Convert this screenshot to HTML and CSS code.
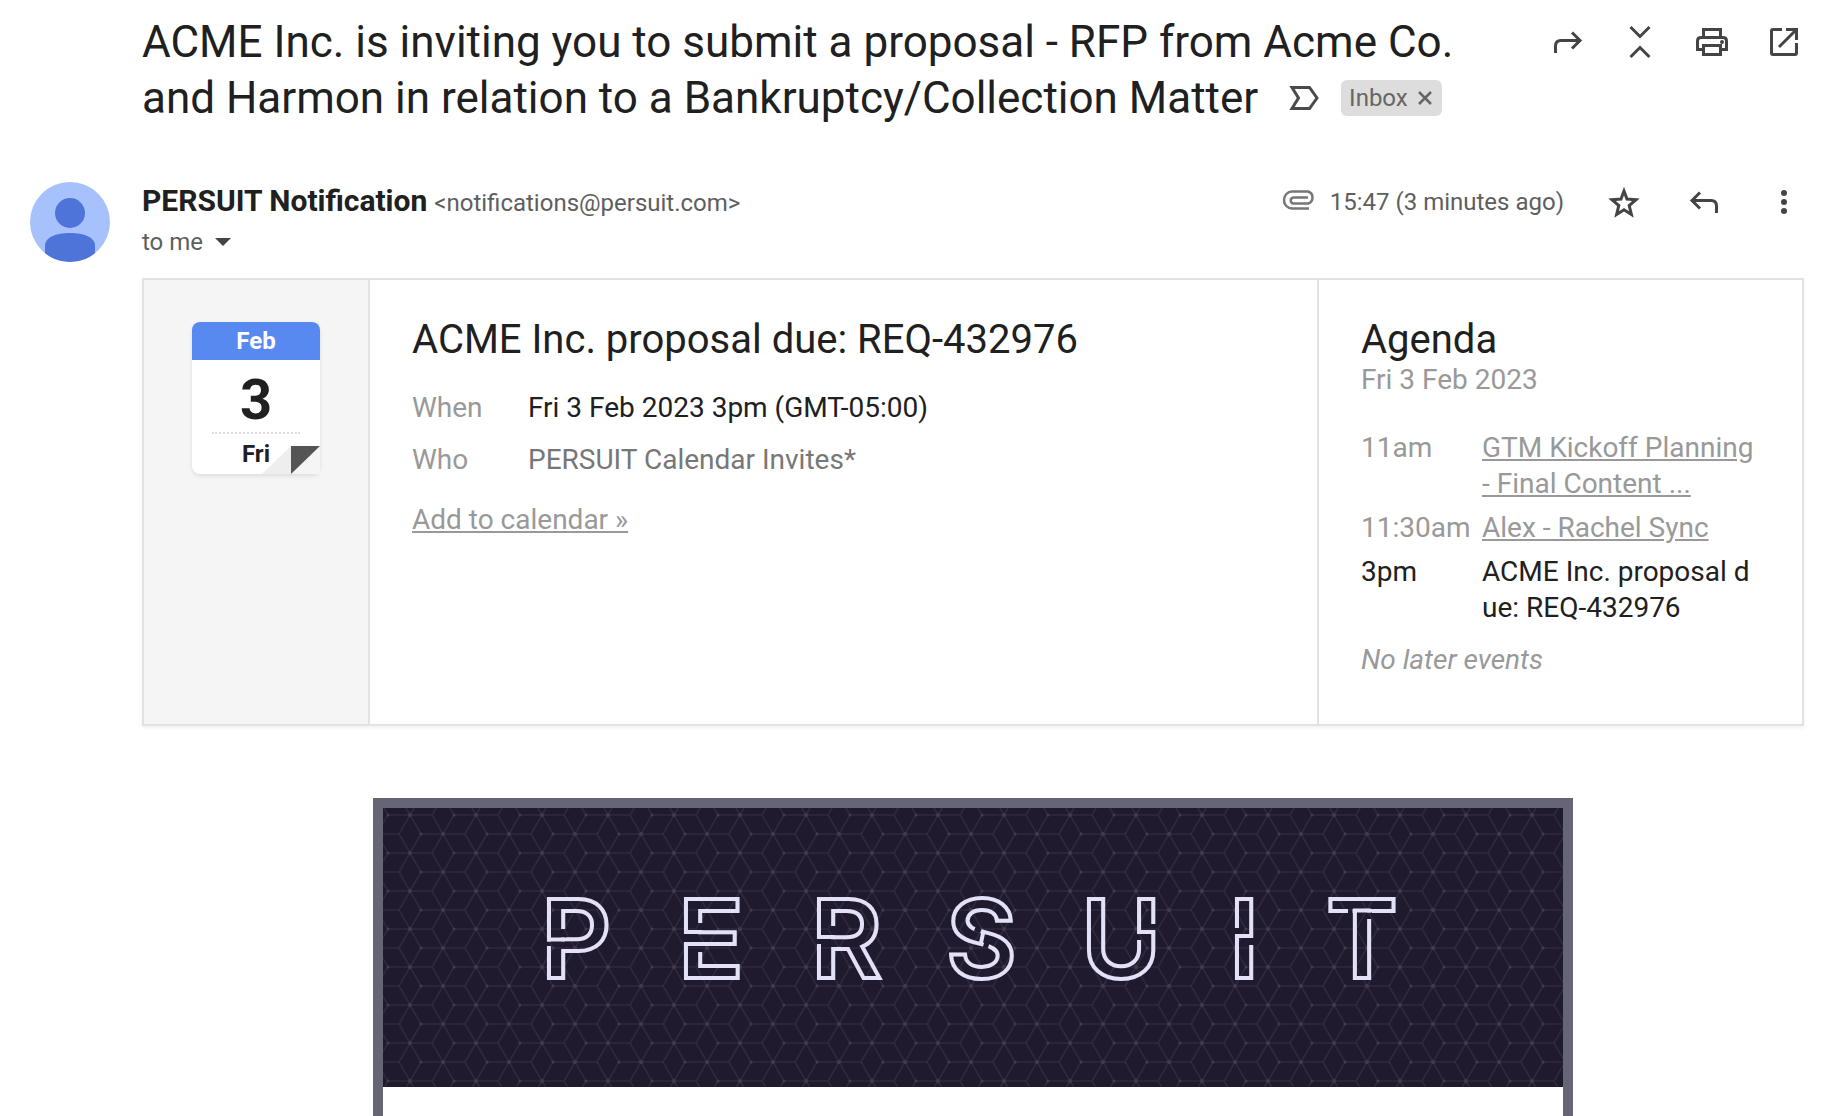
FILE: index.html
```
<!DOCTYPE html>
<html lang="en">

<head>
  <meta charset="UTF-8" />
  <meta name="viewport" content="width=device-width, initial-scale=1.0" />
  <title>ACME Inc. is inviting you to submit a proposal</title>

  <link rel="stylesheet" href="styles.css">
</head>

<body>

  <header class="subject-bar">
    <div class="subject">
      <h1>ACME Inc. is inviting you to submit a proposal - RFP from Acme Co. and Harmon in relation to a Bankruptcy/Collection Matter</h1>
      <div class="labels">
        <button type="button" aria-label="Mark as important">
          <svg width="30" height="24" viewBox="0 0 30 24"><path d="M3 1.500H20.500L28 12L20.500 22.500H3L9.500 12Z" fill="none" stroke="#4a4a4a" stroke-width="3" /></svg>
        </button>
        <div class="chip">
          <span>Inbox</span>
          <button type="button" aria-label="Remove label Inbox">
            <svg width="14" height="14" viewBox="0 0 14 14"><path d="M1 1L13 13M13 1L1 13" stroke="#666" stroke-width="2.500" /></svg>
          </button>
        </div>
      </div>
    </div>
    <div class="tools">
      <button class="icon-btn" type="button" aria-label="Forward">
        <svg width="40" height="40" viewBox="0 0 40 40"><path d="M7.500 31V24Q7.500 18.500 13 18.500H32M24 10.500L32 18.500L24 26.500" /></svg>
      </button>
      <button class="icon-btn" type="button" aria-label="Collapse all">
        <svg width="40" height="40" viewBox="0 0 40 40"><path d="M10.500 5L20 14.500L29.500 5M10.500 35L20 25.500L29.500 35" /></svg>
      </button>
      <button class="icon-btn" type="button" aria-label="Print all">
        <svg width="40" height="40" viewBox="0 0 40 40"><path d="M11.500 15V7.500H28.500V15M11.500 27.500H5.500V19Q5.500 15.500 9 15.500H31Q34.500 15.500 34.500 19V27.500H28.500M11.500 23.500H28.500V32.500H11.500Z" /><circle class="solid" cx="30" cy="20" r="2" /></svg>
      </button>
      <button class="icon-btn" type="button" aria-label="In new window">
        <svg width="40" height="40" viewBox="0 0 40 40"><path d="M18 7.500H9Q7.500 7.500 7.500 9V31Q7.500 32.500 9 32.500H31Q32.500 32.500 32.500 31V21M22 7.500H32.500V18M32 8L15 25" /></svg>
      </button>
    </div>
  </header>

  <main class="message">
    <svg class="avatar" width="80" height="80" viewBox="0 0 80 80">
      <clipPath id="round"><circle cx="40" cy="40" r="40" /></clipPath>
      <g clip-path="url(#round)">
        <rect width="80" height="80" fill="#a6c1fb" />
        <circle cx="40" cy="31" r="15" fill="#4e73d9" />
        <path d="M15 80V64C15 55 26 51 40 51S65 55 65 64V80Z" fill="#4e73d9" />
      </g>
    </svg>

    <div class="content">
      <div class="sender-row">
        <div class="sender">
          <p class="from"><b>PERSUIT Notification</b> <span>&lt;notifications@persuit.com&gt;</span></p>
          <p class="to">to me
            <button type="button" aria-label="Show details">
              <svg width="16" height="8" viewBox="0 0 16 8"><path d="M0 0H16L8 8Z" fill="#444" /></svg>
            </button>
          </p>
        </div>
        <div class="meta">
          <svg width="34" height="24" viewBox="0 0 34 24"><path d="M27 18.500H10A8 8.500 0 0 1 10 1.500H26A6 6.200 0 0 1 26 13.500H11A3.500 3.200 0 0 1 11 7.500H26" fill="none" stroke="#777" stroke-width="2.500" /></svg>
          <span class="time">15:47 (3 minutes ago)</span>
          <div class="actions">
            <button class="icon-btn" type="button" aria-label="Star">
              <svg width="40" height="40" viewBox="0 0 40 40"><path d="M20 9L23 17L32 17.700L25.200 23.500L27.400 32.500L20 27.700L12.600 32.500L14.800 23.500L8 17.700L17 17Z" /></svg>
            </button>
            <button class="icon-btn" type="button" aria-label="Reply">
              <svg width="40" height="40" viewBox="0 0 40 40"><path d="M32.500 31V24Q32.500 18.500 27 18.500H8M16 10.500L8 18.500L16 26.500" /></svg>
            </button>
            <button class="icon-btn" type="button" aria-label="More">
              <svg width="40" height="40" viewBox="0 0 40 40"><g class="solid"><circle cx="20" cy="11" r="3" /><circle cx="20" cy="20" r="3" /><circle cx="20" cy="29" r="3" /></g></svg>
            </button>
          </div>
        </div>
      </div>

      <section class="event-card">
        <div class="date-col">
          <div class="calendar">
            <div class="month">Feb</div>
            <div class="day">3</div>
            <div class="weekday">Fri</div>
            <svg class="fold" width="58" height="28" viewBox="0 0 58 28">
              <path d="M58 0V28H29Z" fill="#f5f5f5" />
              <path d="M0 28L29 0V28Z" fill="#eee" />
              <path d="M29 0H58L29 28Z" fill="#555" />
            </svg>
          </div>
        </div>

        <div class="event-col">
          <h2>ACME Inc. proposal due: REQ-432976</h2>
          <dl class="details">
            <dt>When</dt>
            <dd class="dark">Fri 3 Feb 2023 3pm (GMT-05:00)</dd>
            <dt>Who</dt>
            <dd>PERSUIT Calendar Invites*</dd>
          </dl>
          <a href="#">Add to calendar »</a>
        </div>

        <div class="agenda-col">
          <h2>Agenda</h2>
          <p>Fri 3 Feb 2023</p>
          <table class="agenda">
            <tr>
              <td>11am</td>
              <td><a href="#">GTM Kickoff Planning<br>- Final Content ...</a></td>
            </tr>
            <tr>
              <td>11:30am</td>
              <td><a href="#">Alex - Rachel Sync</a></td>
            </tr>
            <tr class="dark">
              <td>3pm</td>
              <td>ACME Inc. proposal d<br>ue: REQ-432976</td>
            </tr>
          </table>
          <p><i>No later events</i></p>
        </div>
      </section>

      <section class="mail-body">
        <svg class="banner" viewBox="0 0 1180 279" role="img" aria-label="PERSUIT">
          <defs>
            <pattern id="cubes" width="66" height="38" patternUnits="userSpaceOnUse" patternTransform="translate(-6 -12)">
              <path d="M0 0L11 19L0 38M66 0L55 19L66 38M11 19H55M22 0L33 19L44 0M22 38L33 19L44 38M0 0H22M44 0H66M0 38H22M44 38H66" fill="none" stroke="#2f293d" stroke-width="1.500" />
              <g fill="#413b4c">
                <circle cx="33" cy="19" r="2" />
                <circle cx="0" cy="0" r="2" />
                <circle cx="66" cy="0" r="2" />
                <circle cx="0" cy="38" r="2" />
                <circle cx="66" cy="38" r="2" />
                <circle cx="11" cy="19" r="1.500" />
                <circle cx="44" cy="0" r="1.500" />
                <circle cx="44" cy="38" r="1.500" />
              </g>
            </pattern>
            <!-- gaps in the outline of the wordmark -->
            <mask id="gaps" maskUnits="userSpaceOnUse" x="0" y="0" width="1180" height="279">
              <rect width="1180" height="279" fill="#fff" />
              <path d="M180 121V129.600M166 133.600V138M317 115V122M303 126V134M317 138V144M450 118V127M436 131V136M592 120.400L598 122.800M600.500 136.800L605.500 138.300M770 116V122M756 126V132M854 120V126M868 130V137M965 102.500H969.500M986 104.500V111" stroke="#000" stroke-width="6" />
            </mask>
          </defs>
          <rect width="1180" height="279" fill="#1f1a2e" />
          <rect width="1180" height="279" fill="url(#cubes)" />
          <g mask="url(#gaps)">
            <text class="wordmark" x="158 295 428 563 698 846 943" y="170">PERSUIT</text>
          </g>
          <path class="joints" d="M164 131.600H182M301 124H319M301 136H319M434 129H452M597.500 137L600.500 123M754 124H772M852 128H870M970 102.500H988" />
        </svg>
      </section>
    </div>
  </main>

</body>

</html>
```
FILE: styles.css
```
* {
  box-sizing: border-box;
}

body {
  margin: 0;
  padding: 14px 36px 0 30px;
  font-family: "Google Sans", Roboto, "Liberation Sans", sans-serif;
  font-size: 28px;
  line-height: 36px;
  color: #202020;
  background: #fff;
}

h1,
h2,
p,
dl,
dd {
  margin: 0;
  font-weight: 400;
}

button {
  padding: 0;
  border: none;
  background: none;
  cursor: pointer;
}

svg {
  display: block;
}

/* subject line */
.subject-bar {
  display: flex;
  justify-content: space-between;
  align-items: flex-start;
  gap: 48px;
  padding-left: 112px;
}

.subject {
  font-size: 44px;
  line-height: 56px;
}

.subject h1 {
  display: inline;
  font-size: 44px;
}

.labels {
  display: inline-flex;
  align-items: center;
  gap: 22px;
  height: 56px;
  margin-left: 20px;
  vertical-align: top;
}

.chip {
  display: flex;
  align-items: center;
  gap: 10px;
  padding: 0 10px 0 8px;
  border-radius: 6px;
  background: #ddd;
  color: #666;
  font-size: 24px;
  line-height: 36px;
}

.tools,
.actions {
  display: flex;
  gap: 32px;
}

.tools {
  padding-top: 8px;
}

.icon-btn path {
  fill: none;
  stroke: #444;
  stroke-width: 3;
}

.icon-btn .solid {
  fill: #444;
}

/* message */
.message {
  display: flex;
  gap: 32px;
  margin-top: 56px;
}

.avatar {
  flex: none;
}

.content {
  flex: 1;
}

.sender-row {
  display: flex;
  justify-content: space-between;
  height: 96px;
}

.from {
  line-height: 38px;
}

.from b {
  font-size: 30px;
  font-weight: 700;
}

.from span,
.to,
.time {
  font-size: 24px;
  color: #5e5e5e;
}

.to {
  display: flex;
  align-items: center;
  gap: 12px;
  margin-top: 2px;
}

.meta {
  display: flex;
  align-items: center;
  gap: 14px;
  height: 40px;
}

.actions {
  gap: 40px;
  margin-left: 26px;
}

/* calendar card */
.event-card {
  display: flex;
  border: 2px solid #e2e2e2;
  box-shadow: 0 2px 4px rgba(0, 0, 0, 0.06);
}

.date-col {
  flex: none;
  width: 226px;
  padding: 42px 48px;
  border-right: 2px solid #e2e2e2;
  background: #f5f5f5;
}

.calendar {
  position: relative;
  height: 152px;
  border-radius: 8px;
  background: #fff;
  text-align: center;
  font-size: 24px;
  font-weight: 700;
  box-shadow: 0 2px 4px rgba(0, 0, 0, 0.1);
}

.month {
  height: 38px;
  line-height: 38px;
  border-radius: 8px 8px 0 0;
  background: #5889f1;
  color: #fff;
}

.day {
  height: 74px;
  margin: 0 20px;
  border-bottom: 2px dotted #ddd;
  font-size: 56px;
  line-height: 80px;
}

.weekday {
  position: relative;
  z-index: 1;
  line-height: 40px;
}

.fold {
  position: absolute;
  right: 0;
  bottom: 0;
}

.event-col {
  flex: 1;
  padding: 38px 42px;
}

.event-card h2 {
  font-size: 40px;
  line-height: 44px;
}

.event-col,
.event-card dd {
  color: #777;
}

.event-card h2,
.event-card .dark {
  color: #202020;
}

.event-card a,
.event-card dt,
.agenda-col {
  color: #999;
}

.details {
  display: grid;
  grid-template-columns: 100px 1fr;
  gap: 16px;
  margin: 28px 0 24px;
}

.agenda-col {
  flex: none;
  width: 485px;
  padding: 38px 42px 46px;
  border-left: 2px solid #e2e2e2;
}

.agenda {
  margin: 28px 0 12px;
  border-spacing: 0;
}

.agenda td {
  padding: 4px 0;
  vertical-align: top;
  white-space: nowrap;
}

.agenda td:first-child {
  width: 121px;
}

/* mail body */
.mail-body {
  max-width: 1200px;
  min-height: 318px;
  margin: 72px auto 0;
  border: 10px solid #656575;
  border-bottom: none;
}

.wordmark {
  font-family: Inter, sans-serif;
  font-size: 109px;
  font-weight: 600;
}

.wordmark,
.joints {
  fill: none;
  stroke: #e3e1f8;
  stroke-width: 4px;
}
```
